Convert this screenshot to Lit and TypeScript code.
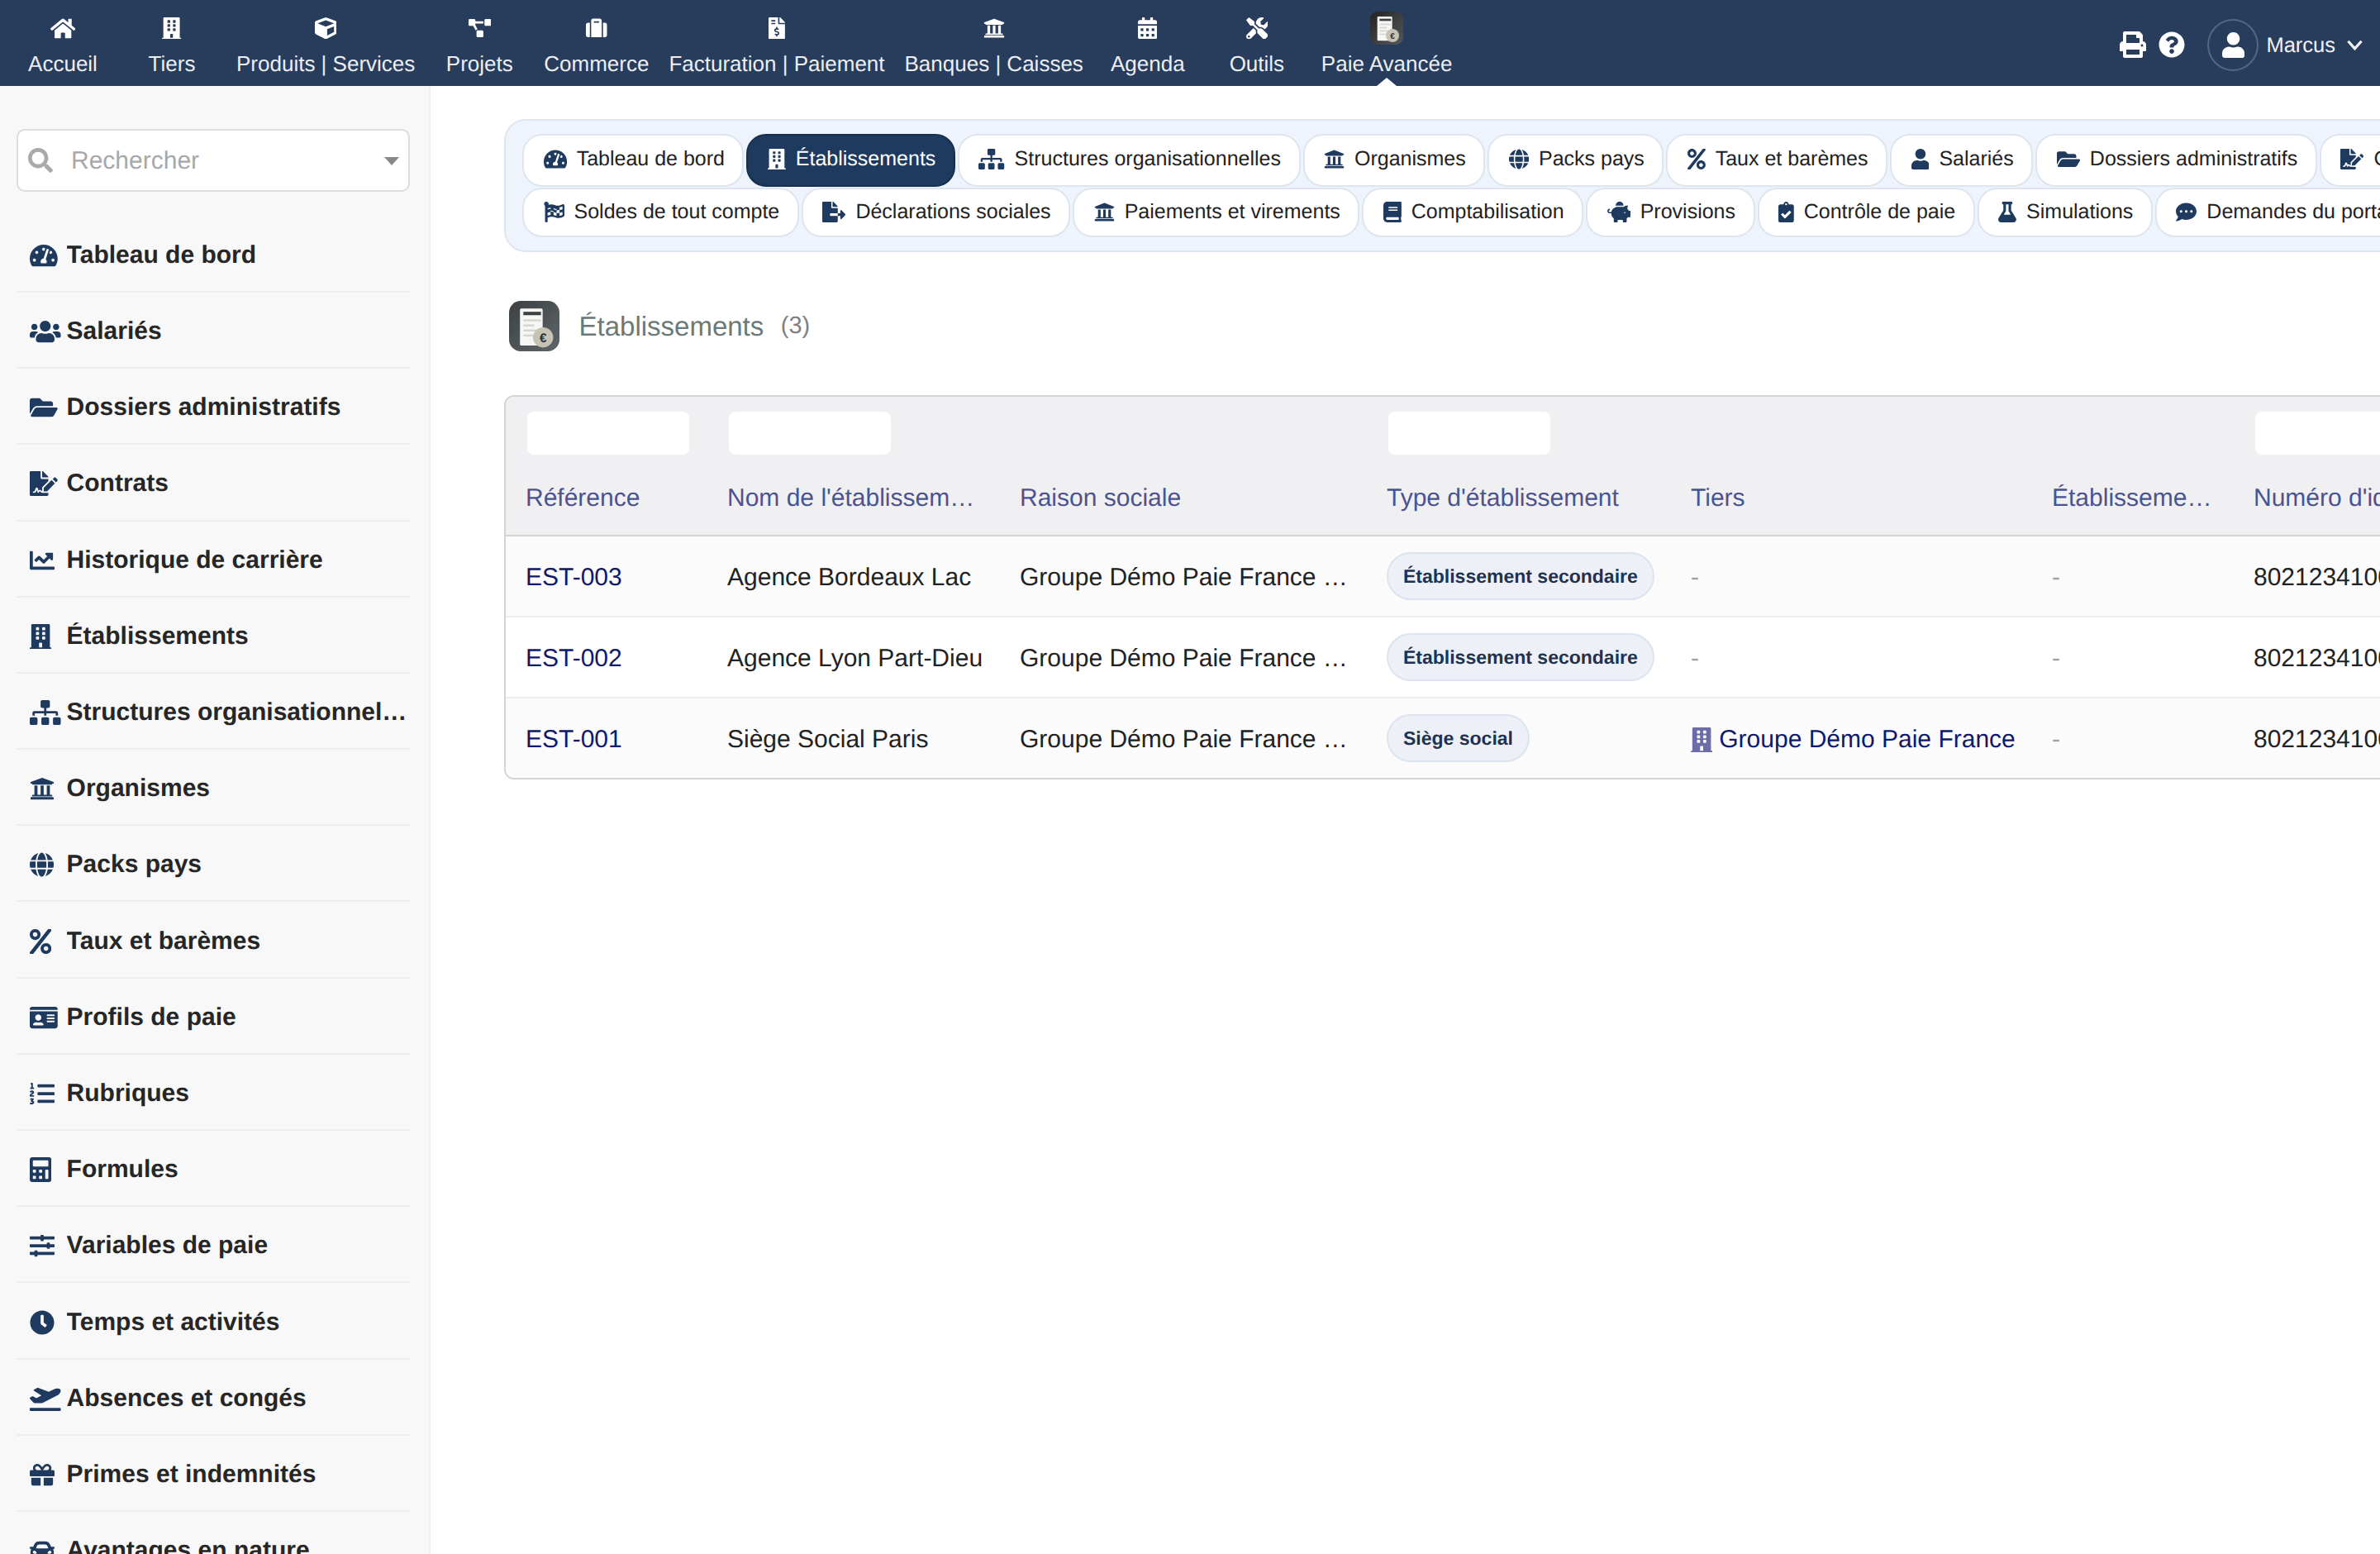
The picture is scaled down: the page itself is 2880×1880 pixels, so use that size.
import { LitElement, html, css, svg } from "lit";
import { customElement } from "lit/decorators.js";

const I: Record<string, [number, string]> = {
  home: [576, "M280.37 148.26L96 300.11V464a16 16 0 0 0 16 16l112.06-.29a16 16 0 0 0 15.92-16V368a16 16 0 0 1 16-16h64a16 16 0 0 1 16 16v95.64a16 16 0 0 0 16 16.05L464 480a16 16 0 0 0 16-16V300L295.67 148.26a12.19 12.19 0 0 0-15.3 0zM571.6 251.47L488 182.56V44.05a12 12 0 0 0-12-12h-56a12 12 0 0 0-12 12v72.61L318.47 43a48 48 0 0 0-61 0L4.34 251.47a12 12 0 0 0-1.6 16.9l25.5 31A12 12 0 0 0 45.15 301l235.22-193.74a12.19 12.19 0 0 1 15.3 0L530.9 301a12 12 0 0 0 16.9-1.6l25.5-31a12 12 0 0 0-1.7-16.93z"],
  building: [448, "M436 480h-20V24c0-13.255-10.745-24-24-24H56C42.745 0 32 10.745 32 24v456H12c-6.627 0-12 5.373-12 12v20h448v-20c0-6.627-5.373-12-12-12zM128 76c0-6.627 5.373-12 12-12h40c6.627 0 12 5.373 12 12v40c0 6.627-5.373 12-12 12h-40c-6.627 0-12-5.373-12-12V76zm0 96c0-6.627 5.373-12 12-12h40c6.627 0 12 5.373 12 12v40c0 6.627-5.373 12-12 12h-40c-6.627 0-12-5.373-12-12v-40zm52 148h-40c-6.627 0-12-5.373-12-12v-40c0-6.627 5.373-12 12-12h40c6.627 0 12 5.373 12 12v40c0 6.627-5.373 12-12 12zm76 160h-64v-84c0-6.627 5.373-12 12-12h40c6.627 0 12 5.373 12 12v84zm64-172c0 6.627-5.373 12-12 12h-40c-6.627 0-12-5.373-12-12v-40c0-6.627 5.373-12 12-12h40c6.627 0 12 5.373 12 12v40zm0-96c0 6.627-5.373 12-12 12h-40c-6.627 0-12-5.373-12-12v-40c0-6.627 5.373-12 12-12h40c6.627 0 12 5.373 12 12v40zm0-96c0 6.627-5.373 12-12 12h-40c-6.627 0-12-5.373-12-12V76c0-6.627 5.373-12 12-12h40c6.627 0 12 5.373 12 12v40z"],
  cube: [512, "M239.1 6.3l-208 78c-18.7 7-31.1 25-31.1 45v225.1c0 18.2 10.3 34.8 26.5 42.9l208 104c13.5 6.8 29.4 6.8 42.9 0l208-104c16.3-8.1 26.5-24.8 26.5-42.9V129.3c0-20-12.4-37.9-31.1-44.9l-208-78C262 2.2 250 2.2 239.1 6.3zM256 68.4l192 72v1.1l-192 78-192-78v-1.1l192-72zm32 356V275.5l160-65v133.9l-160 80z"],
  project: [640, "M384 320H256c-17.67 0-32 14.33-32 32v128c0 17.67 14.33 32 32 32h128c17.67 0 32-14.33 32-32V352c0-17.67-14.33-32-32-32zM192 32c0-17.67-14.33-32-32-32H32C14.33 0 0 14.33 0 32v128c0 17.67 14.33 32 32 32h95.72l73.16 128.04C211.98 300.98 232.4 288 256 288h.28L192 175.51V128h224V64H192V32zM608 0H480c-17.67 0-32 14.33-32 32v128c0 17.67 14.33 32 32 32h128c17.67 0 32-14.33 32-32V32c0-17.67-14.33-32-32-32z"],
  suitcase: [512, "M128 480h256V80c0-26.47-21.53-48-48-48H176c-26.47 0-48 21.53-48 48v400zm64-384h128v32H192V96zm320 80v256c0 26.5-21.5 48-48 48h-48V128h48c26.5 0 48 21.5 48 48zM96 480H48c-26.5 0-48-21.5-48-48V176c0-26.5 21.5-48 48-48h48v352z"],
  invoice: [384, "M377 105L279.1 7c-4.5-4.5-10.6-7-17-7H256v128h128v-6.1c0-6.3-2.5-12.4-7-16.9zm-153 31V0H24C10.7 0 0 10.7 0 24v464c0 13.3 10.7 24 24 24h336c13.3 0 24-10.7 24-24V160H248c-13.2 0-24-10.8-24-24zM64 72c0-4.42 3.58-8 8-8h80c4.42 0 8 3.58 8 8v16c0 4.42-3.58 8-8 8H72c-4.42 0-8-3.58-8-8V72zm0 80v-16c0-4.42 3.58-8 8-8h80c4.42 0 8 3.58 8 8v16c0 4.42-3.58 8-8 8H72c-4.42 0-8-3.58-8-8zm144 263.88V440c0 4.42-3.58 8-8 8h-16c-4.42 0-8-3.58-8-8v-24.29c-11.29-.58-22.27-4.52-31.37-11.35-3.9-2.93-4.1-8.77-.57-12.14l11.75-11.21c2.77-2.64 6.89-2.76 10.13-.73 3.87 2.42 8.26 3.72 12.82 3.72h28.11c6.5 0 11.8-5.92 11.8-13.19 0-5.95-3.61-11.19-8.77-12.73l-45-13.5c-18.59-5.58-31.58-23.42-31.58-43.39 0-24.52 19.05-44.44 42.67-45.07V232c0-4.42 3.58-8 8-8h16c4.42 0 8 3.58 8 8v24.29c11.29.58 22.27 4.51 31.37 11.35 3.9 2.93 4.1 8.77.57 12.14l-11.75 11.21c-2.77 2.64-6.89 2.76-10.13.73-3.87-2.43-8.26-3.72-12.82-3.72h-28.11c-6.5 0-11.8 5.92-11.8 13.19 0 5.95 3.61 11.19 8.77 12.73l45 13.5c18.59 5.58 31.58 23.42 31.58 43.39 0 24.53-19.05 44.44-42.67 45.07z"],
  university: [512, "M496 128v16a8 8 0 0 1-8 8h-24v12c0 6.627-5.373 12-12 12H60c-6.627 0-12-5.373-12-12v-12H24a8 8 0 0 1-8-8v-16a8 8 0 0 1 4.941-7.392l232-88a7.996 7.996 0 0 1 6.118 0l232 88A8 8 0 0 1 496 128zm-24 304H40c-13.255 0-24 10.745-24 24v16a8 8 0 0 0 8 8h464a8 8 0 0 0 8-8v-16c0-13.255-10.745-24-24-24zM96 192v192H60c-6.627 0-12 5.373-12 12v20h416v-20c0-6.627-5.373-12-12-12h-36V192h-64v192h-64V192h-64v192h-64V192H96z"],
  calendar: [448, "M0 464c0 26.5 21.5 48 48 48h352c26.5 0 48-21.5 48-48V192H0v272zm320-196c0-6.6 5.4-12 12-12h40c6.6 0 12 5.4 12 12v40c0 6.6-5.4 12-12 12h-40c-6.6 0-12-5.4-12-12v-40zm0 128c0-6.6 5.4-12 12-12h40c6.6 0 12 5.4 12 12v40c0 6.6-5.4 12-12 12h-40c-6.6 0-12-5.4-12-12v-40zM192 268c0-6.6 5.4-12 12-12h40c6.6 0 12 5.4 12 12v40c0 6.6-5.4 12-12 12h-40c-6.6 0-12-5.4-12-12v-40zm0 128c0-6.6 5.4-12 12-12h40c6.6 0 12 5.4 12 12v40c0 6.6-5.4 12-12 12h-40c-6.6 0-12-5.4-12-12v-40zM64 268c0-6.6 5.4-12 12-12h40c6.6 0 12 5.4 12 12v40c0 6.6-5.4 12-12 12H76c-6.6 0-12-5.4-12-12v-40zm0 128c0-6.6 5.4-12 12-12h40c6.6 0 12 5.4 12 12v40c0 6.6-5.4 12-12 12H76c-6.6 0-12-5.4-12-12v-40zM400 64h-48V16c0-8.8-7.2-16-16-16h-32c-8.8 0-16 7.2-16 16v48H160V16c0-8.8-7.2-16-16-16h-32c-8.8 0-16 7.2-16 16v48H48C21.5 64 0 85.5 0 112v48h448v-48c0-26.5-21.5-48-48-48z"],
  tools: [512, "M501.1 395.7L384 278.6c-23.1-23.1-57.6-27.6-85.4-13.9L192 158.1V96L64 0 0 64l96 128h62.1l106.6 106.6c-13.6 27.8-9.2 62.3 13.9 85.4l117.1 117.1c14.6 14.6 38.2 14.6 52.7 0l52.7-52.7c14.5-14.6 14.5-38.2 0-52.7zM331.7 225c28.3 0 54.9 11 74.9 31l19.4 19.4c15.8-6.9 30.8-16.5 43.8-29.5 37.1-37.1 49.7-89.3 37.9-136.7-2.2-9-13.5-12.1-20.1-5.5l-74.4 74.4-67.9-11.3L334 98.9l74.4-74.4c6.6-6.6 3.4-17.9-5.7-20.2-47.4-11.7-99.6.9-136.6 37.9-28.5 28.5-41.9 66.1-41.2 103.6l82.1 82.1c8.1-1.9 16.5-2.9 24.7-2.9zm-103.9 82l-56.7-56.7L18.7 402.8c-25 25-25 65.5 0 90.5s65.5 25 90.5 0l123.6-123.6c-7.6-19.9-9.9-41.6-5-62.7zM64 472c-13.2 0-24-10.8-24-24 0-13.3 10.7-24 24-24s24 10.7 24 24c0 13.2-10.7 24-24 24z"],
  print: [512, "M448 192V77.25c0-8.49-3.37-16.62-9.37-22.63L393.37 9.37c-6-6-14.14-9.37-22.63-9.37H96C78.33 0 64 14.33 64 32v160c-35.35 0-64 28.65-64 64v112c0 8.84 7.16 16 16 16h48v96c0 17.67 14.33 32 32 32h320c17.67 0 32-14.33 32-32v-96h48c8.84 0 16-7.16 16-16V256c0-35.35-28.65-64-64-64zm-64 256H128v-96h256v96zm0-224H128V64h192v48c0 8.84 7.16 16 16 16h48v96zm48 72c-13.25 0-24-10.75-24-24 0-13.26 10.75-24 24-24s24 10.74 24 24c0 13.25-10.75 24-24 24z"],
  question: [512, "M504 256c0 136.997-111.043 248-248 248S8 392.997 8 256C8 119.083 119.043 8 256 8s248 111.083 248 248zM262.655 90c-54.497 0-89.255 22.957-116.549 63.758-3.536 5.286-2.353 12.415 2.715 16.258l34.699 26.31c5.205 3.947 12.621 3.008 16.665-2.122 17.864-22.658 30.113-35.797 57.303-35.797 20.429 0 45.698 13.148 45.698 32.958 0 14.976-12.363 22.667-32.534 33.976C247.128 238.528 216 254.941 216 296v4c0 6.627 5.373 12 12 12h56c6.627 0 12-5.373 12-12v-1.333c0-28.462 83.186-29.647 83.186-106.667 0-58.002-60.165-102-116.531-102zM256 338c-25.365 0-46 20.635-46 46 0 25.364 20.635 46 46 46s46-20.636 46-46c0-25.365-20.635-46-46-46z"],
  user: [448, "M224 256c70.7 0 128-57.3 128-128S294.7 0 224 0 96 57.3 96 128s57.3 128 128 128zm89.6 32h-16.7c-22.2 10.2-46.9 16-72.9 16s-50.6-5.8-72.9-16h-16.7C60.2 288 0 348.2 0 422.4V464c0 26.5 21.5 48 48 48h352c26.5 0 48-21.5 48-48v-41.6c0-74.2-60.2-134.4-134.4-134.4z"],
  search: [512, "M505 442.7L405.3 343c-4.5-4.5-10.6-7-17-7H372c27.6-35.3 44-79.7 44-128C416 93.1 322.9 0 208 0S0 93.1 0 208s93.1 208 208 208c48.3 0 92.7-16.4 128-44v16.3c0 6.4 2.5 12.5 7 17l99.7 99.7c9.4 9.4 24.6 9.4 33.9 0l28.3-28.3c9.4-9.4 9.4-24.6.1-34zM208 336c-70.7 0-128-57.2-128-128 0-70.7 57.2-128 128-128 70.7 0 128 57.2 128 128 0 70.7-57.2 128-128 128z"],
  tach: [576, "M288 32C128.94 32 0 160.94 0 320c0 52.8 14.25 102.26 39.06 144.8 5.61 9.62 16.3 15.2 27.44 15.2h443c11.14 0 21.83-5.58 27.44-15.2C561.75 422.26 576 372.8 576 320c0-159.06-128.94-288-288-288zm0 64c14.71 0 26.58 10.13 30.32 23.65-1.11 2.26-2.64 4.23-3.45 6.67l-9.22 27.67c-5.13 3.49-10.97 6.01-17.64 6.01-17.67 0-32-14.33-32-32S270.33 96 288 96zM96 384c-17.67 0-32-14.33-32-32s14.33-32 32-32 32 14.33 32 32-14.33 32-32 32zm48-160c-17.67 0-32-14.33-32-32s14.33-32 32-32 32 14.33 32 32-14.33 32-32 32zm246.77-72.41l-61.33 184C343.13 347.33 352 364.54 352 384c0 11.72-3.38 22.55-8.88 32H232.88c-5.5-9.45-8.88-20.28-8.88-32 0-33.94 26.5-61.43 59.9-63.59l61.34-184.01c4.17-12.56 17.73-19.45 30.36-15.17 12.57 4.19 19.35 17.79 15.17 30.36zm14.66 57.2l15.52-46.55c3.47-1.29 7.13-2.23 11.05-2.23 17.67 0 32 14.33 32 32s-14.33 32-32 32c-11.38-.01-20.89-6.28-26.57-15.22zM480 384c-17.67 0-32-14.33-32-32s14.33-32 32-32 32 14.33 32 32-14.33 32-32 32z"],
  users: [640, "M96 224c35.3 0 64-28.7 64-64s-28.7-64-64-64-64 28.7-64 64 28.7 64 64 64zm448 0c35.3 0 64-28.7 64-64s-28.7-64-64-64-64 28.7-64 64 28.7 64 64 64zm32 32h-64c-17.6 0-33.5 7.1-45.1 18.6 40.3 22.1 68.9 62 75.1 109.4h66c17.7 0 32-14.3 32-32v-32c0-35.3-28.7-64-64-64zm-256 0c61.9 0 112-50.1 112-112S381.9 32 320 32 208 82.1 208 144s50.1 112 112 112zm76.8 32h-8.3c-20.8 10-43.9 16-68.5 16s-47.6-6-68.5-16h-8.3C179.6 288 128 339.6 128 403.2V432c0 26.5 21.5 48 48 48h288c26.5 0 48-21.5 48-48v-28.8c0-63.6-51.6-115.2-115.2-115.2zm-223.7-13.4C161.5 263.1 145.6 256 128 256H64c-35.3 0-64 28.7-64 64v32c0 17.7 14.3 32 32 32h65.9c6.3-47.4 34.9-87.3 75.2-109.4z"],
  folder: [576, "M572.694 292.093L500.27 416.248A63.997 63.997 0 0 1 444.989 448H45.025c-18.523 0-30.064-20.093-20.731-36.093l72.424-124.155A64 64 0 0 1 152 256h399.964c18.523 0 30.064 20.093 20.73 36.093zM152 224h328v-48c0-26.51-21.49-48-48-48H272l-64-64H48C21.49 64 0 85.49 0 112v278.046l69.077-118.418C86.214 242.25 117.989 224 152 224z"],
  sign: [576, "M218.17 424.14c-2.95-5.92-8.09-6.52-10.17-6.52s-7.22.59-10.02 6.19l-7.67 15.34c-6.37 12.78-25.03 11.37-29.48-2.09L144 386.59l-10.61 31.88c-5.89 17.66-22.38 29.53-41 29.53H80c-8.84 0-16-7.16-16-16s7.16-16 16-16h12.39c4.83 0 9.11-3.08 10.64-7.66l18.19-54.64c3.3-9.81 12.44-16.41 22.78-16.41s19.48 6.59 22.77 16.41l13.88 41.64c19.75-16.19 54.06-9.7 66 14.16 1.89 3.78 5.49 5.95 9.36 6.26v-82.12l128-127.09V160H248c-13.2 0-24-10.8-24-24V0H24C10.7 0 0 10.7 0 24v464c0 13.3 10.7 24 24 24h336c13.3 0 24-10.7 24-24v-40l-128-.11c-16.12-.31-30.58-9.28-37.83-23.75zM384 121.9c0-6.3-2.5-12.4-7-16.9L279.1 7c-4.5-4.5-10.6-7-17-7H256v128h128v-6.1zm-96 225.06V416h68.99l161.68-162.78-67.88-67.88L288 346.96zm280.54-179.63l-31.87-31.87c-9.94-9.94-26.07-9.94-36.01 0l-27.25 27.25 67.88 67.88 27.25-27.25c9.95-9.94 9.95-26.07 0-36.01z"],
  chart: [512, "M496 384H64V80c0-8.84-7.16-16-16-16H16C7.16 64 0 71.16 0 80v336c0 17.67 14.33 32 32 32h464c8.84 0 16-7.16 16-16v-32c0-8.84-7.16-16-16-16zM464 96H345.94c-21.38 0-32.09 25.85-16.97 40.97l32.4 32.4L288 242.75l-73.37-73.37c-12.5-12.5-32.76-12.5-45.25 0l-68.69 68.69c-6.25 6.25-6.25 16.38 0 22.63l22.62 22.62c6.25 6.25 16.38 6.25 22.63 0L192 237.25l73.37 73.37c12.5 12.5 32.76 12.5 45.25 0l96-96 32.4 32.4c15.12 15.12 40.97 4.41 40.97-16.97V112c.01-8.84-7.15-16-15.99-16z"],
  sitemap: [640, "M128 352H32c-17.67 0-32 14.33-32 32v96c0 17.67 14.33 32 32 32h96c17.67 0 32-14.33 32-32v-96c0-17.67-14.33-32-32-32zm-24-80h192v48h48v-48h192v48h48v-57.59c0-21.17-17.23-38.41-38.41-38.41H344v-64h40c17.67 0 32-14.33 32-32V32c0-17.67-14.33-32-32-32H256c-17.67 0-32 14.33-32 32v96c0 17.67 14.33 32 32 32h40v64H94.41C73.23 224 56 241.23 56 262.41V320h48v-48zm264 80h-96c-17.67 0-32 14.33-32 32v96c0 17.67 14.33 32 32 32h96c17.67 0 32-14.33 32-32v-96c0-17.67-14.33-32-32-32zm240 0h-96c-17.67 0-32 14.33-32 32v96c0 17.67 14.33 32 32 32h96c17.67 0 32-14.33 32-32v-96c0-17.67-14.33-32-32-32z"],
  globe: [496, "M336.5 160C322 70.7 287.8 8 248 8s-74 62.7-88.5 152h177zM152 256c0 22.2 1.2 43.5 3.3 64h185.3c2.1-20.5 3.3-41.8 3.3-64s-1.2-43.5-3.3-64H155.3c-2.1 20.5-3.3 41.8-3.3 64zm324.7-96c-28.6-67.9-86.5-120.4-158-141.6 24.4 33.8 41.2 84.7 50 141.6h108zM177.2 18.4C105.8 39.6 47.8 92.1 19.3 160h108c8.7-56.9 25.5-107.8 49.9-141.6zM487.4 192H372.7c2.1 21 3.3 42.5 3.3 64s-1.2 43-3.3 64h114.6c5.5-20.5 8.6-41.8 8.6-64s-3.1-43.5-8.5-64zM120 256c0-21.5 1.2-43 3.3-64H8.6C3.2 212.5 0 233.8 0 256s3.2 43.5 8.6 64h114.6c-2-21-3.2-42.5-3.2-64zm39.5 96c14.5 89.3 48.7 152 88.5 152s74-62.7 88.5-152h-177zm159.3 141.6c71.4-21.2 129.4-73.7 158-141.6h-108c-8.8 56.9-25.6 107.8-50 141.6zM19.3 352c28.6 67.9 86.5 120.4 158 141.6-24.4-33.8-41.2-84.7-50-141.6h-108z"],
  percent: [448, "M112 224c61.9 0 112-50.1 112-112S173.9 0 112 0 0 50.1 0 112s50.1 112 112 112zm0-160c26.5 0 48 21.5 48 48s-21.5 48-48 48-48-21.5-48-48 21.5-48 48-48zm224 224c-61.9 0-112 50.1-112 112s50.1 112 112 112 112-50.1 112-112-50.1-112-112-112zm0 160c-26.5 0-48-21.5-48-48s21.5-48 48-48 48 21.5 48 48-21.5 48-48 48zM392.3.2l31.6.1c19.4.1 30.9 21.8 20 37.8L77.4 501.6a23.95 23.95 0 0 1-20 10.2l-33.4-.1c-19.5 0-30.9-21.9-19.7-37.8l368-463.7C377.2 4 384.5.2 392.3.2z"],
  idcard: [576, "M528 32H48C21.5 32 0 53.5 0 80v16h576V80c0-26.5-21.5-48-48-48zM0 432c0 26.5 21.5 48 48 48h480c26.5 0 48-21.5 48-48V128H0v304zm352-232c0-4.4 3.6-8 8-8h144c4.4 0 8 3.6 8 8v16c0 4.4-3.6 8-8 8H360c-4.4 0-8-3.6-8-8v-16zm0 64c0-4.4 3.6-8 8-8h144c4.4 0 8 3.6 8 8v16c0 4.4-3.6 8-8 8H360c-4.4 0-8-3.6-8-8v-16zm0 64c0-4.4 3.6-8 8-8h144c4.4 0 8 3.6 8 8v16c0 4.4-3.6 8-8 8H360c-4.4 0-8-3.6-8-8v-16zM176 192c35.3 0 64 28.7 64 64s-28.7 64-64 64-64-28.7-64-64 28.7-64 64-64zM67.1 396.2C75.5 370.5 99.6 352 128 352h8.2c12.3 5.1 25.7 8 39.8 8s27.6-2.9 39.8-8h8.2c28.4 0 52.5 18.5 60.9 44.2 3.2 9.9-5.2 19.8-15.6 19.8H82.7c-10.4 0-18.8-10-15.6-19.8z"],
  listol: [512, "M61.77 401l17.5-20.15a19.92 19.92 0 0 0 5.07-14.19v-3.31C84.34 356 80.5 352 73 352H16a8 8 0 0 0-8 8v16a8 8 0 0 0 8 8h22.83a157.41 157.41 0 0 0-11 12.31l-5.61 7c-4 5.07-5.25 10.13-2.8 14.88l1.05 1.93c3 5.76 6.29 7.88 12.25 7.88h4.73c10.33 0 15.94 2.44 15.94 9.09 0 4.72-4.2 8.22-14.36 8.22a41.54 41.54 0 0 1-15.47-3.12c-6.49-3.88-11.74-3.5-15.6 3.12l-5.59 9.31c-3.72 6.13-3.19 11.72 2.63 15.94 7.71 4.69 20.38 9.44 37 9.44 34.16 0 48.5-22.75 48.5-44.12-.03-14.38-9.12-29.76-28.73-34.88zM496 224H176a16 16 0 0 0-16 16v32a16 16 0 0 0 16 16h320a16 16 0 0 0 16-16v-32a16 16 0 0 0-16-16zm0-160H176a16 16 0 0 0-16 16v32a16 16 0 0 0 16 16h320a16 16 0 0 0 16-16V80a16 16 0 0 0-16-16zm0 320H176a16 16 0 0 0-16 16v32a16 16 0 0 0 16 16h320a16 16 0 0 0 16-16v-32a16 16 0 0 0-16-16zM16 160h64a8 8 0 0 0 8-8v-16a8 8 0 0 0-8-8H64V40a8 8 0 0 0-8-8H32a8 8 0 0 0-7.14 4.42l-8 16A8 8 0 0 0 24 64h8v64H16a8 8 0 0 0-8 8v16a8 8 0 0 0 8 8zm-3.91 160H80a8 8 0 0 0 8-8v-16a8 8 0 0 0-8-8H41.32c3.29-10.29 48.34-18.68 48.34-56.44 0-29.06-25-39.56-44.47-39.56-21.36 0-33.8 10-40.46 18.75-4.37 5.59-3 10.84 2.8 15.37l8.58 6.88c5.61 4.56 11 2.47 16.12-2.44a13.44 13.44 0 0 1 9.46-3.84c3.33 0 9.28 1.56 9.28 8.75C51 248.19 0 257.31 0 304.59v4C0 316 5.08 320 12.09 320z"],
  calc: [448, "M400 0H48C22.4 0 0 22.4 0 48v416c0 25.6 22.4 48 48 48h352c25.6 0 48-22.4 48-48V48c0-25.6-22.4-48-48-48zM128 435.2c0 6.4-6.4 12.8-12.8 12.8H76.8c-6.4 0-12.8-6.4-12.8-12.8v-38.4c0-6.4 6.4-12.8 12.8-12.8h38.4c6.4 0 12.8 6.4 12.8 12.8v38.4zm0-128c0 6.4-6.4 12.8-12.8 12.8H76.8c-6.4 0-12.8-6.4-12.8-12.8v-38.4c0-6.4 6.4-12.8 12.8-12.8h38.4c6.4 0 12.8 6.4 12.8 12.8v38.4zm128 128c0 6.4-6.4 12.8-12.8 12.8h-38.4c-6.4 0-12.8-6.4-12.8-12.8v-38.4c0-6.4 6.4-12.8 12.8-12.8h38.4c6.4 0 12.8 6.4 12.8 12.8v38.4zm0-128c0 6.4-6.4 12.8-12.8 12.8h-38.4c-6.4 0-12.8-6.4-12.8-12.8v-38.4c0-6.4 6.4-12.8 12.8-12.8h38.4c6.4 0 12.8 6.4 12.8 12.8v38.4zm128 128c0 6.4-6.4 12.8-12.8 12.8h-38.4c-6.4 0-12.8-6.4-12.8-12.8V268.8c0-6.4 6.4-12.8 12.8-12.8h38.4c6.4 0 12.8 6.4 12.8 12.8v166.4zm0-256c0 6.4-6.4 12.8-12.8 12.8H76.8c-6.4 0-12.8-6.4-12.8-12.8V76.8C64 70.4 70.4 64 76.8 64h294.4c6.4 0 12.8 6.4 12.8 12.8v102.4z"],
  sliders: [512, "M496 384H160v-16c0-8.8-7.2-16-16-16h-32c-8.8 0-16 7.2-16 16v16H16c-8.8 0-16 7.2-16 16v32c0 8.8 7.2 16 16 16h80v16c0 8.8 7.2 16 16 16h32c8.8 0 16-7.2 16-16v-16h336c8.8 0 16-7.2 16-16v-32c0-8.8-7.2-16-16-16zm0-160h-80v-16c0-8.8-7.2-16-16-16h-32c-8.8 0-16 7.2-16 16v16H16c-8.8 0-16 7.2-16 16v32c0 8.8 7.2 16 16 16h336v16c0 8.8 7.2 16 16 16h32c8.8 0 16-7.2 16-16v-16h80c8.8 0 16-7.2 16-16v-32c0-8.8-7.2-16-16-16zm0-160H288V48c0-8.8-7.2-16-16-16h-32c-8.8 0-16 7.2-16 16v16H16C7.2 64 0 71.2 0 80v32c0 8.8 7.2 16 16 16h208v16c0 8.8 7.2 16 16 16h32c8.8 0 16-7.2 16-16v-16h208c8.8 0 16-7.2 16-16V80c0-8.8-7.2-16-16-16z"],
  clock: [512, "M256,8C119,8,8,119,8,256S119,504,256,504,504,393,504,256,393,8,256,8Zm92.49,313h0l-20,25a16,16,0,0,1-22.49,2.5h0l-67-49.72a40,40,0,0,1-15-31.23V112a16,16,0,0,1,16-16h32a16,16,0,0,1,16,16V256l58,42.5A16,16,0,0,1,348.49,321Z"],
  plane: [640, "M624 448H16c-8.84 0-16 7.16-16 16v32c0 8.84 7.16 16 16 16h608c8.84 0 16-7.16 16-16v-32c0-8.84-7.16-16-16-16zM80.55 341.27c6.28 6.84 15.1 10.72 24.33 10.71l130.54-.18a65.62 65.62 0 0 0 29.64-7.12l290.96-147.65c26.74-13.57 50.71-32.94 67.02-58.31 18.31-28.48 20.3-49.09 13.07-63.65-7.21-14.57-24.74-25.27-58.25-27.45-29.85-1.94-59.54 5.92-86.28 19.48l-98.51 49.99-218.7-82.06a17.799 17.799 0 0 0-18-1.11L90.62 67.29c-10.67 5.41-13.25 19.65-5.17 28.53l156.22 98.1-103.21 52.38-72.35-36.47a17.804 17.804 0 0 0-16.07.02L9.91 230.22c-10.44 5.3-13.19 19.12-5.57 28.08l76.21 82.97z"],
  gift: [512, "M32 448c0 17.7 14.3 32 32 32h160V320H32v128zm256 32h160c17.7 0 32-14.3 32-32V320H288v160zm192-320h-42.1c6.2-12.1 10.1-25.5 10.1-40 0-48.5-39.5-88-88-88-41.6 0-68.5 21.3-103 68.3-34.5-47-61.4-68.3-103-68.3-48.5 0-88 39.5-88 88 0 14.5 3.8 27.9 10.1 40H32c-17.7 0-32 14.3-32 32v80c0 8.8 7.2 16 16 16h480c8.8 0 16-7.2 16-16v-80c0-17.7-14.3-32-32-32zm-326.1 0c-22.1 0-40-17.9-40-40s17.9-40 40-40c19.9 0 34.6 3.3 86.1 80h-86.1zm206.1 0h-86.1c51.4-76.5 65.7-80 86.1-80 22.1 0 40 17.9 40 40s-17.9 40-40 40z"],
  car: [512, "M499.99 176h-59.87l-16.64-41.6C406.38 91.63 365.57 64 319.5 64h-127c-46.06 0-86.88 27.63-103.99 70.4L71.87 176H12.01C4.2 176-1.53 183.34.37 190.91l6 24C7.7 220.25 12.5 224 18.01 224h20.07C24.65 235.73 16 252.78 16 272v48c0 16.12 6.16 30.67 16 41.93V416c0 17.67 14.33 32 32 32h32c17.67 0 32-14.33 32-32v-32h256v32c0 17.67 14.33 32 32 32h32c17.67 0 32-14.33 32-32v-54.07c9.84-11.25 16-25.8 16-41.93v-48c0-19.22-8.65-36.27-22.07-48H494c5.51 0 10.31-3.75 11.64-9.09l6-24c1.89-7.57-3.84-14.91-11.65-14.91zm-352.06-17.83c7.29-18.22 24.94-30.17 44.57-30.17h127c19.63 0 37.28 11.95 44.57 30.17L384 208H128l19.93-49.83zM96 319.8c-19.2 0-32-12.76-32-31.9S76.8 256 96 256s48 28.71 48 47.85-28.8 15.95-48 15.95zm320 0c-19.2 0-48 3.19-48-15.95S396.8 256 416 256s32 12.76 32 31.9-12.8 31.9-32 31.9z"],
  flag: [512, "M243.2 189.9V258c26.1 5.9 49.3 15.6 73.6 22.3v-68.2c-26-5.8-49.4-15.5-73.6-22.2zm223.3-123c-34.3 15.9-76.5 31.9-117 31.9C296 98.8 251.7 64 184.3 64c-25 0-47.3 4.4-68 12 2.8-7.3 4.1-15.2 3.6-23.6C118.1 24 94.8 1.2 66.3 0 34.3-1.3 8 24.3 8 56c0 19 9.5 35.8 24 45.9V488c0 13.3 10.7 24 24 24h16c13.3 0 24-10.7 24-24v-94.4c28.3-12.1 63.6-22.1 114.4-22.1 53.6 0 97.8 34.8 165.2 34.8 48.2 0 86.7-16.3 122.5-40.9 8.7-6 13.8-15.8 13.8-26.4V95.9c.1-23.3-24.2-38.8-45.4-29zM169.6 325.5c-25.8 2.7-50 8.7-73.6 17.9v-71.2c26.2-9.7 48.1-15.8 73.6-18.4v71.7zm147.2 22.2c-25.2-4.6-49.1-13.1-73.6-22.4v-67.3c-24.5-6.8-47.4-14.6-73.6-8.7v-71.7c-25.5 2.6-47.4 8.7-73.6 18.3V165c23.6-9.1 47.8-15.1 73.6-17.9v75c29.1-1.9 50.3 4.6 73.6 11.7V165c24.5 6.8 47.8 15.3 73.6 20.5v94.7c25.9 5 50.4 3.9 73.6-11.1v-70c-23.2 9.8-47.6 15.8-73.6 16.6v71.3c-.0 0 0 0 0 0zm73.6-141.6v-66.2c24.8-3.7 48.9-11.3 73.6-21.9v70.2c-23 10.1-47.4 16.3-73.6 17.9zm0 141.6v-71.2c25.3-1.3 50-7.4 73.6-18.2v71.4c-22.8 12.6-47.3 17.9-73.6 18z"],
  fileexport: [576, "M384 121.9c0-6.3-2.5-12.4-7-16.9L279.1 7c-4.5-4.5-10.6-7-17-7H256v128h128zM571 308l-95.7-96.4c-10.1-10.1-27.4-3-27.4 11.3V288h-64v64h64v65.2c0 14.3 17.3 21.4 27.4 11.3L571 332c6.6-6.6 6.6-17.4 0-24zm-379 28v-32c0-8.8 7.2-16 16-16h176V160H248c-13.2 0-24-10.8-24-24V0H24C10.7 0 0 10.7 0 24v464c0 13.3 10.7 24 24 24h336c13.3 0 24-10.7 24-24V352H208c-8.8 0-16-7.2-16-16z"],
  book: [448, "M448 360V24c0-13.3-10.7-24-24-24H96C43 0 0 43 0 96v320c0 53 43 96 96 96h328c13.3 0 24-10.7 24-24v-16c0-7.5-3.5-14.3-8.9-18.7-4.2-15.4-4.2-59.3 0-74.7 5.4-4.3 8.9-11.1 8.9-18.6zM128 134c0-3.3 2.7-6 6-6h212c3.3 0 6 2.7 6 6v20c0 3.3-2.7 6-6 6H134c-3.3 0-6-2.7-6-6v-20zm0 64c0-3.3 2.7-6 6-6h212c3.3 0 6 2.7 6 6v20c0 3.3-2.7 6-6 6H134c-3.3 0-6-2.7-6-6v-20zm253.4 250H96c-17.7 0-32-14.3-32-32 0-17.6 14.4-32 32-32h285.4c-1.9 17.1-1.9 46.9 0 64z"],
  piggy: [576, "M560 224h-29.5c-8.8-20-21.6-37.7-37.4-52.5L512 96h-32c-29.4 0-55.4 13.5-73 34.3-7.6-1.1-15.1-2.3-23-2.3H256c-77.4 0-141.9 55-156.8 128H56c-14.8 0-26.5-13.5-23.5-28.8C34.7 215.8 45.4 208 57 208h1c3.3 0 6-2.7 6-6v-20c0-3.3-2.7-6-6-6-28.5 0-53.9 20.4-57.5 48.6C-3.9 258.8 22.7 288 56 288h40c0 52.2 25.4 98.1 64 127.3V496c0 8.8 7.2 16 16 16h64c8.8 0 16-7.2 16-16v-48h128v48c0 8.8 7.2 16 16 16h64c8.8 0 16-7.2 16-16v-80.7c11.8-8.9 22.3-19.4 31.3-31.3H560c8.8 0 16-7.2 16-16V240c0-8.8-7.2-16-16-16zm-128 64c-8.8 0-16-7.2-16-16s7.2-16 16-16 16 7.2 16 16-7.2 16-16 16zM256 96h128c5.4 0 10.7.4 15.9.8 0-.3.1-.5.1-.8 0-53-43-96-96-96s-96 43-96 96c0 2.1.5 4.1.6 6.2 15.2-3.9 31-6.2 47.4-6.2z"],
  clip: [384, "M336 64h-80c0-35.3-28.7-64-64-64s-64 28.7-64 64H48C21.5 64 0 85.5 0 112v352c0 26.5 21.5 48 48 48h288c26.5 0 48-21.5 48-48V112c0-26.5-21.5-48-48-48zM192 40c13.3 0 24 10.7 24 24s-10.7 24-24 24-24-10.7-24-24 10.7-24 24-24zm121.2 231.8l-143 141.8c-4.7 4.7-12.3 4.6-17-.1l-82.6-83.3c-4.7-4.7-4.6-12.3.1-17L99.1 285c4.7-4.7 12.3-4.6 17 .1l46 46.4 106-105.2c4.7-4.7 12.3-4.6 17 .1l28.2 28.4c4.7 4.8 4.6 12.3-.1 17z"],
  flask: [448, "M437.2 403.5L320 215V64h8c13.3 0 24-10.7 24-24V24c0-13.3-10.7-24-24-24H120c-13.3 0-24 10.7-24 24v16c0 13.3 10.7 24 24 24h8v151L10.8 403.5C-18.5 450.6 15.3 512 70.9 512h306.2c55.7 0 89.4-61.5 60.1-108.5zM137.9 320l48.2-77.6c3.7-5.2 5.8-11.6 5.8-18.4V64h64v160c0 6.9 2.2 13.2 5.8 18.4l48.2 77.6h-172z"],
  comment: [512, "M256 32C114.6 32 0 125.1 0 240c0 49.6 21.4 95 57 130.7C44.5 421.1 2.7 466 2.2 466.5c-2.2 2.3-2.8 5.7-1.5 8.7S4.8 480 8 480c66.3 0 116-31.8 140.6-51.4 32.7 12.3 69 19.4 107.4 19.4 141.4 0 256-93.1 256-208S397.4 32 256 32zM128 272c-17.7 0-32-14.3-32-32s14.3-32 32-32 32 14.3 32 32-14.3 32-32 32zm128 0c-17.7 0-32-14.3-32-32s14.3-32 32-32 32 14.3 32 32-14.3 32-32 32zm128 0c-17.7 0-32-14.3-32-32s14.3-32 32-32 32 14.3 32 32-14.3 32-32 32z"],
};

const ic = (n: string, size: number) => {
  const [w, d] = I[n];
  return html`<svg class="i" viewBox="0 0 ${w} 512" width=${(size * w) / 512} height=${size}>${svg`<path d=${d} fill-rule="evenodd"></path>`}</svg>`;
};

let gid = 0;
const logo = (s: number, from: string, to: string) => {
  const id = `lg${gid++}`;
  return html`<svg class="i" viewBox="0 0 60 60" width=${s} height=${s}>${svg`
    <defs><linearGradient id=${id} x1="0" y1="0" x2="1" y2="1"><stop offset="0" stop-color=${from}></stop><stop offset="1" stop-color=${to}></stop></linearGradient></defs>
    <rect width="60" height="60" rx="14" fill="url(#${id})"></rect>
    <rect x="13" y="9" width="27" height="44" rx="1.5" fill="#f6f6f4"></rect>
    <rect x="17" y="13" width="21" height="4" fill="#3c4042"></rect>
    <rect x="17" y="22" width="21" height="2.4" fill="#d4d4d2"></rect>
    <rect x="17" y="28" width="13" height="2.4" fill="#d4d4d2"></rect>
    <rect x="17" y="34" width="21" height="2.4" fill="#d4d4d2"></rect>
    <rect x="17" y="40" width="13" height="2.4" fill="#d4d4d2"></rect>
    <circle cx="40.5" cy="43.5" r="12" fill="#c6c3b4"></circle>
    <text x="40.5" y="49" text-anchor="middle" font-size="15" font-weight="700" font-family="Liberation Sans, sans-serif" fill="#2d3133">€</text>
  `}</svg>`;
};

const MENU: [string, string, number][] = [
  ["home", "Accueil", 27], ["building", "Tiers", 26.5], ["cube", "Produits | Services", 26.5], ["project", "Projets", 22],
  ["suitcase", "Commerce", 25.5], ["invoice", "Facturation | Paiement", 26.5], ["university", "Banques | Caisses", 26],
  ["calendar", "Agenda", 26.5], ["tools", "Outils", 26.5],
];

const SIDE: [string, string][] = [
  ["tach", "Tableau de bord"], ["users", "Salariés"], ["folder", "Dossiers administratifs"], ["sign", "Contrats"],
  ["chart", "Historique de carrière"], ["building", "Établissements"], ["sitemap", "Structures organisationnelles"],
  ["university", "Organismes"], ["globe", "Packs pays"], ["percent", "Taux et barèmes"], ["idcard", "Profils de paie"],
  ["listol", "Rubriques"], ["calc", "Formules"], ["sliders", "Variables de paie"], ["clock", "Temps et activités"],
  ["plane", "Absences et congés"], ["gift", "Primes et indemnités"], ["car", "Avantages en nature"],
];

const TABS1: [string, string][] = [
  ["tach", "Tableau de bord"], ["building", "Établissements"], ["sitemap", "Structures organisationnelles"],
  ["university", "Organismes"], ["globe", "Packs pays"], ["percent", "Taux et barèmes"], ["user", "Salariés"],
  ["folder", "Dossiers administratifs"], ["sign", "Contrats"],
];
const TABS2: [string, string][] = [
  ["flag", "Soldes de tout compte"], ["fileexport", "Déclarations sociales"], ["university", "Paiements et virements"],
  ["book", "Comptabilisation"], ["piggy", "Provisions"], ["clip", "Contrôle de paie"], ["flask", "Simulations"],
  ["comment", "Demandes du portail"],
];

const ROWS = [
  { ref: "EST-003", nom: "Agence Bordeaux Lac", type: "Établissement secondaire", tiers: false },
  { ref: "EST-002", nom: "Agence Lyon Part-Dieu", type: "Établissement secondaire", tiers: false },
  { ref: "EST-001", nom: "Siège Social Paris", type: "Siège social", tiers: true },
];

const HEAD: [string, boolean][] = [
  ["Référence", true], ["Nom de l'établissem…", true], ["Raison sociale", false], ["Type d'établissement", true],
  ["Tiers", false], ["Établisseme…", false], ["Numéro d'identification", true],
];

@customElement("app-root")
export class AppRoot extends LitElement {
  static styles = css`
    :host {
      display: block; width: 2880px; height: 1880px; overflow: hidden; background: #fff;
      font-family: "Liberation Sans", Arial, sans-serif; color: #222; text-rendering: geometricPrecision;
    }
    * { box-sizing: border-box; }
    .i { display: block; fill: currentColor; flex: none; }
    .top { height: 104px; background: #283c5c; display: flex; padding-left: 10px; color: #fff; }
    .mi { min-width: 132px; padding: 0 12px; height: 104px; display: flex; flex-direction: column; align-items: center; position: relative; }
    .mi-ic { height: 40px; margin-top: 14px; display: flex; align-items: center; }
    .mi-tx { font-size: 26px; line-height: 30px; margin-top: 8px; color: #eceef2; white-space: nowrap; }
    .mi.on::after {
      content: ""; position: absolute; left: 50%; bottom: 0; margin-left: -12px; width: 0; height: 0;
      border-left: 12px solid transparent; border-right: 12px solid transparent; border-bottom: 10px solid #fff;
    }
    .tr { margin-left: auto; display: flex; align-items: center; padding: 4px 21px 0 0; }
    .q { margin-left: 15px; }
    .av { width: 62px; height: 63px; border: 2px solid rgba(255,255,255,.22); border-radius: 50%; margin-left: 27px; display: flex; align-items: center; justify-content: center; }
    .nm { font-size: 25.5px; margin-left: 9px; padding-top: 2px; color: #f0f1f4; }
    .chev { margin-left: 14px; fill: none; stroke: #f0f1f4; stroke-width: 3.4; }

    .body { display: flex; height: 1776px; }
    .side { width: 521px; flex: none; background: #f8f8f8; border-right: 2px solid #eee; padding: 52px 25px 0 20px; overflow: hidden; }
    .search { height: 76px; width: 476px; background: #fff; border: 2.5px solid #ddd; border-radius: 10px; display: flex; align-items: center; padding: 0 11px 0 12px; color: #aaa; margin-bottom: 29.8px; }
    .search span { font-size: 30px; margin-left: 22px; padding-top: 2px; flex: 1; color: #a8a8a8; }
    .sc { width: 0; height: 0; border-left: 9px solid transparent; border-right: 9px solid transparent; border-top: 10px solid #888; margin-top: 2px; }
    .si { height: 92.2px; border-bottom: 2px solid #eee; display: flex; align-items: center; padding: 4px 0 0 16px; width: 476px; }
    .si-ic { width: 44.6px; flex: none; color: #1e3a5f; }
    .si-tx { font-size: 30px; font-weight: 700; color: #262626; white-space: nowrap; overflow: hidden; text-overflow: ellipsis; }

    .main { flex: 1; min-width: 0; overflow: hidden; padding: 40px 0 0 89px; }
    .tabs { width: 2500px; height: 161px; background: #eff4fc; border: 2.5px solid #dde5f0; border-right: 0; border-radius: 26px 0 0 26px; padding: 15.5px 0 0 20px; display: flex; flex-direction: column; gap: 1px; }
    .row { display: flex; gap: 3px; }
    .tab { min-height: 60px; padding: 0 21.5px 0 23.5px; background: #fff; border: 2px solid #dde5f0; border-radius: 24px; display: flex; align-items: flex-start; font-size: 25px; color: #222; white-space: nowrap; }
    .tab.on { min-height: 64px; background: #1e3a5f; border-color: #16304f; color: #fff; }
    .tab-in { height: 56px; display: flex; align-items: center; gap: 12px; }
    .r1 .tab-in { height: 58px; }
    .tab-ic { color: #1e3a5f; }
    .tab.on .tab-ic { color: #fff; }

    .title { margin-top: 59px; height: 61px; padding-left: 6px; display: flex; align-items: center; gap: 23.5px; }
    .title b { font-weight: 400; font-size: 33px; padding-top: 1px; color: #6b7a76; }
    .title span { font-size: 29px; color: #808080; margin-left: -3px; }

    .tw { margin-top: 53px; width: 2600px; border: 2px solid #d4d4d4; border-radius: 12px 0 0 12px; border-right: 0; overflow: hidden; }
    table { border-collapse: separate; border-spacing: 0; table-layout: fixed; width: 2600px; font-size: 30px; }
    .c1 { width: 244px; } .c2 { width: 354px; } .c3 { width: 444px; } .c4 { width: 368px; } .c5 { width: 437px; } .c6 { width: 244px; }
    thead td { background: #f0f0f3; }
    .fc { height: 80px; padding: 18px 0 10px 26px; vertical-align: top; }
    .fb { width: 196px; height: 52px; background: #fff; border-radius: 8px; }
    .lc { height: 89px; padding: 0 0 2px 24px; color: #4b5490; border-bottom: 2px solid #d4d4d4; white-space: nowrap; }
    tbody td { height: 98px; padding: 3px 0 0 24px; border-bottom: 2px solid #eee; white-space: nowrap; vertical-align: middle; }
    tbody td.bc { padding-top: 0; }
    tbody tr:nth-child(odd) td { background: #fbfbfb; }
    tbody tr:last-child td { border-bottom: 0; height: 96px; }
    .lk { color: #101a6a; }
    .dash { color: #a0a0a0; }
    .badge { display: inline-block; height: 58px; line-height: 54px; padding: 0 18px; border: 2px solid #dbe4ef; border-radius: 29px; background: #edf1f7; font-size: 23px; font-weight: 700; color: #1f3350; vertical-align: middle; }
    .tl { display: flex; align-items: center; gap: 8px; color: #101a6a; }
    .tl-ic { color: #6c6ca8; }
  `;

  render() {
    const tab = (t: [string, string], on = false) => html`<div class="tab ${on ? "on" : ""}"><div class="tab-in"><span class="tab-ic">${ic(t[0], 25)}</span><span>${t[1]}</span></div></div>`;
    return html`
      <div class="top">
        ${MENU.map((m) => html`<div class="mi"><div class="mi-ic">${ic(m[0], m[2])}</div><div class="mi-tx">${m[1]}</div></div>`)}
        <div class="mi on"><div class="mi-ic">${logo(40, "#222224", "#55585a")}</div><div class="mi-tx">Paie Avancée</div></div>
        <div class="tr">
          ${ic("print", 32)}
          <span class="q">${ic("question", 32)}</span>
          <div class="av">${ic("user", 31)}</div>
          <span class="nm">Marcus</span>
          <svg class="chev" viewBox="0 0 20 13" width="19" height="13"><path d="M1.5 1.5 L10 11 L18.5 1.5"></path></svg>
        </div>
      </div>
      <div class="body">
        <aside class="side">
          <div class="search">${ic("search", 30)}<span>Rechercher</span><div class="sc"></div></div>
          ${SIDE.map((s) => html`<div class="si"><div class="si-ic">${ic(s[0], 30)}</div><div class="si-tx">${s[1]}</div></div>`)}
        </aside>
        <main class="main">
          <div class="tabs">
            <div class="row r1">${TABS1.map((t, i) => tab(t, i === 1))}</div>
            <div class="row">${TABS2.map((t) => tab(t))}</div>
          </div>
          <div class="title">${logo(61, "#3c4043", "#5f6568")}<b>Établissements</b><span>(3)</span></div>
          <div class="tw">
            <table>
              <colgroup><col class="c1" /><col class="c2" /><col class="c3" /><col class="c4" /><col class="c5" /><col class="c6" /><col /></colgroup>
              <thead>
                <tr>${HEAD.map((h) => html`<td class="fc">${h[1] ? html`<div class="fb"></div>` : ""}</td>`)}</tr>
                <tr>${HEAD.map((h) => html`<td class="lc">${h[0]}</td>`)}</tr>
              </thead>
              <tbody>
                ${ROWS.map((r) => html`<tr>
                  <td class="lk">${r.ref}</td>
                  <td>${r.nom}</td>
                  <td>Groupe Démo Paie France …</td>
                  <td class="bc"><span class="badge">${r.type}</span></td>
                  <td>${r.tiers ? html`<div class="tl"><span class="tl-ic">${ic("building", 30)}</span>Groupe Démo Paie France</div>` : html`<span class="dash">-</span>`}</td>
                  <td><span class="dash">-</span></td>
                  <td>80212341000012</td>
                </tr>`)}
              </tbody>
            </table>
          </div>
        </main>
      </div>
    `;
  }
}
